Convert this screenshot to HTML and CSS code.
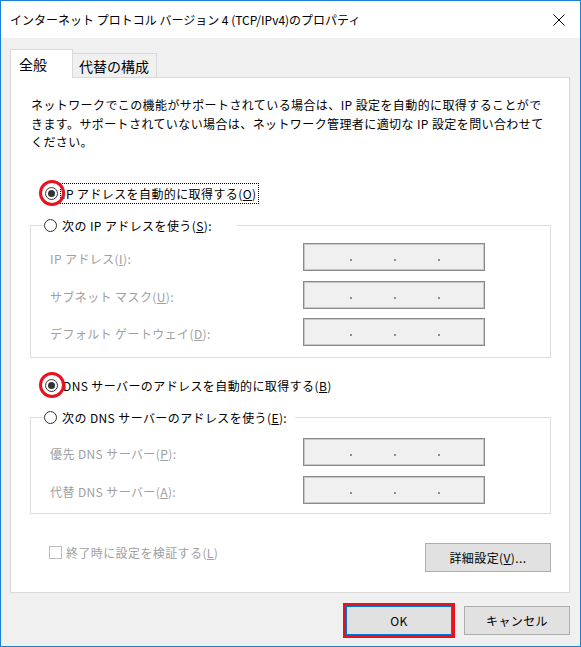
FILE: index.html
```html
<!DOCTYPE html>
<html lang="ja">
<head>
<meta charset="utf-8">
<title>インターネット プロトコル バージョン 4 (TCP/IPv4)のプロパティ</title>
<link rel="stylesheet" href="styles.css">
</head>
<body>
<div class="window">
  <div class="titlebar">
    <span class="title">インターネット プロトコル バージョン 4 (TCP/IPv4)のプロパティ</span>
    <span class="close"><svg width="12" height="12" viewBox="0 0 12 12"><path d="M0.5 0.5L11.5 11.5M11.5 0.5L0.5 11.5" stroke="#000" stroke-width="1" fill="none"/></svg></span>
  </div>
  <div class="content">
    <div class="tabs">
      <div class="tab active">全般</div>
      <div class="tab">代替の構成</div>
    </div>
    <div class="panel">
      <p class="desc">ネットワークでこの機能がサポートされている場合は、IP 設定を自動的に取得することがで<br>きます。サポートされていない場合は、ネットワーク管理者に適切な IP 設定を問い合わせて<br>ください。</p>

      <div class="radio-row first"><span class="radio checked marked"></span><span class="label focus">IP アドレスを自動的に取得する(<u>O</u>)</span></div>

      <fieldset class="group g1">
        <legend class="radio-row"><span class="radio"></span><span class="label">次の IP アドレスを使う(<u>S</u>):</span></legend>
        <div class="field"><span class="flabel">IP アドレス(<u>I</u>):</span><span class="ip"><span class="seg"></span><span class="dot"></span><span class="seg"></span><span class="dot"></span><span class="seg"></span><span class="dot"></span><span class="seg"></span></span></div>
        <div class="field"><span class="flabel">サブネット マスク(<u>U</u>):</span><span class="ip"><span class="seg"></span><span class="dot"></span><span class="seg"></span><span class="dot"></span><span class="seg"></span><span class="dot"></span><span class="seg"></span></span></div>
        <div class="field"><span class="flabel">デフォルト ゲートウェイ(<u>D</u>):</span><span class="ip"><span class="seg"></span><span class="dot"></span><span class="seg"></span><span class="dot"></span><span class="seg"></span><span class="dot"></span><span class="seg"></span></span></div>
      </fieldset>

      <div class="radio-row second"><span class="radio checked marked"></span><span class="label">DNS サーバーのアドレスを自動的に取得する(<u>B</u>)</span></div>

      <fieldset class="group g2">
        <legend class="radio-row"><span class="radio"></span><span class="label">次の DNS サーバーのアドレスを使う(<u>E</u>):</span></legend>
        <div class="field"><span class="flabel">優先 DNS サーバー(<u>P</u>):</span><span class="ip"><span class="seg"></span><span class="dot"></span><span class="seg"></span><span class="dot"></span><span class="seg"></span><span class="dot"></span><span class="seg"></span></span></div>
        <div class="field"><span class="flabel">代替 DNS サーバー(<u>A</u>):</span><span class="ip"><span class="seg"></span><span class="dot"></span><span class="seg"></span><span class="dot"></span><span class="seg"></span><span class="dot"></span><span class="seg"></span></span></div>
      </fieldset>

      <div class="bottom-row">
        <div class="check-row"><span class="checkbox"></span><span class="flabel">終了時に設定を検証する(<u>L</u>)</span></div>
        <button class="btn adv">詳細設定(<u>V</u>)...</button>
      </div>
    </div>
    <div class="footer">
      <button class="btn ok">OK</button>
      <button class="btn">キャンセル</button>
    </div>
  </div>
</div>
</body>
</html>
```

FILE: styles.css
```css
html, body {
  margin: 0;
  padding: 0;
}

body {
  font-family: "Noto Sans CJK JP", "Noto Sans", sans-serif;
  font-size: 12px;
  letter-spacing: 0.4px;
  color: #000;
  background: #fff;
}

.window {
  box-sizing: border-box;
  width: 581px;
  height: 647px;
  border: 1px solid #1a7fd6;
  background: #f0f0f0;
  display: flex;
  flex-direction: column;
}

.titlebar {
  height: 37px;
  background: #fff;
  display: flex;
  align-items: center;
  padding-left: 9px;
  flex: none;
}

.title {
  flex: 1;
  letter-spacing: 0;
  line-height: 18px;
}

.close {
  width: 42px;
  height: 100%;
  display: flex;
  align-items: center;
  justify-content: center;
}

.close svg {
  display: block;
}

.content {
  flex: 1;
  padding: 11px 10px 0 9px;
  display: flex;
  flex-direction: column;
}

/* Tabs */
.tabs {
  display: flex;
  align-items: flex-end;
  height: 29px;
  margin-bottom: -1px;
  position: relative;
  z-index: 1;
}

.tab {
  box-sizing: border-box;
  height: 24px;
  margin-bottom: 1px;
  border: 1px solid #d9d9d9;
  border-left: none;
  border-bottom: none;
  background: #f0f0f0;
  font-size: 14px;
  letter-spacing: 0;
  display: flex;
  align-items: center;
  padding: 1px 5px 0 6px;
  width: 84px;
}

.tab.active {
  height: 29px;
  width: 63px;
  margin-bottom: 0;
  border-left: 1px solid #d9d9d9;
  background: #fff;
  padding: 0 0 0 8px;
}

/* Panel */
.panel {
  box-sizing: border-box;
  height: 516px;
  background: #fff;
  border: 1px solid #d9d9d9;
  padding: 0 18px 0 19px;
  display: flex;
  flex-direction: column;
}

.desc {
  margin: 18px 0 0;
  padding-left: 1px;
  line-height: 18.5px;
}

.radio-row {
  display: flex;
  align-items: center;
  height: 20px;
  gap: 5px;
}

.radio-row.first {
  margin: 31.5px 0 0 15px;
}

.radio-row.second {
  margin: 17px 0 0 15px;
}

.radio {
  box-sizing: border-box;
  width: 13px;
  height: 13px;
  border: 1px solid #333;
  border-radius: 50%;
  background: #fff;
  display: flex;
  align-items: center;
  justify-content: center;
  position: relative;
  flex: none;
}

.radio.checked::after {
  content: "";
  width: 7px;
  height: 7px;
  border-radius: 50%;
  background: #333;
}

/* red annotation ring drawn over the radio */
.radio.marked::before {
  content: "";
  position: absolute;
  box-sizing: border-box;
  width: 26px;
  height: 26px;
  border: 3px solid #e8121e;
  border-radius: 50%;
  left: 50%;
  top: 50%;
  transform: translate(-50%, -50%);
}

.label {
  line-height: 17px;
  white-space: nowrap;
}

.label.focus {
  outline: 1px dotted #000;
  outline-offset: 0;
  padding: 1px 2px 1px 1px;
  margin-left: -2px;
}

/* Group boxes */
.group {
  margin: 12px 0 0;
  border: 1px solid #dcdcdc;
  padding: 8px 0 11px 14px;
  min-width: 0;
}

.group.g2 {
  padding: 11px 0 9px 14px;
}

.group legend {
  padding: 0 8px 0 0;
  margin-left: -1px;
}

.g1 legend {
  padding-right: 25px;
}

.field {
  display: flex;
  align-items: center;
  height: 28px;
  padding-left: 5px;
}

.g1 .field + .field {
  margin-top: 9.5px;
}

.g2 .field + .field {
  margin-top: 10px;
}

.flabel {
  color: #a0a0a0;
  white-space: nowrap;
}

.field .flabel {
  width: 253px;
  padding-top: 3px;
  flex: none;
}

.ip {
  box-sizing: border-box;
  width: 182px;
  height: 28px;
  border: 1px solid #8a8a8a;
  box-shadow: inset 0 0 0 1px #c8c8c8;
  background: #f0f0f0;
  display: flex;
  align-items: center;
  padding-left: 4px;
}

.seg {
  width: 42px;
  flex: none;
}

.dot {
  width: 2px;
  height: 2px;
  margin-top: 6px;
  background: #8b8f9a;
  flex: none;
}

/* bottom row */
.bottom-row {
  margin-top: 29px;
  display: flex;
  justify-content: space-between;
  align-items: flex-start;
}

.check-row {
  display: flex;
  align-items: center;
  height: 19px;
  gap: 4px;
  margin-left: 19px;
}

.checkbox {
  box-sizing: border-box;
  width: 13px;
  height: 13px;
  border: 1px solid #bcbcbc;
  background: #fff;
  flex: none;
}

.btn {
  box-sizing: border-box;
  height: 29px;
  background: #e1e1e1;
  border: 1px solid #adadad;
  font: inherit;
  letter-spacing: inherit;
  color: #000;
  padding: 0;
  display: flex;
  align-items: center;
  justify-content: center;
}

.btn.adv {
  width: 126px;
}

.footer {
  margin-top: 13px;
  display: flex;
  justify-content: flex-end;
  gap: 12px;
}

.footer .btn {
  width: 106px;
}

.btn.ok {
  border-color: #0078d7;
  outline: 3px solid #e8121e;
  outline-offset: 0;
}
```
